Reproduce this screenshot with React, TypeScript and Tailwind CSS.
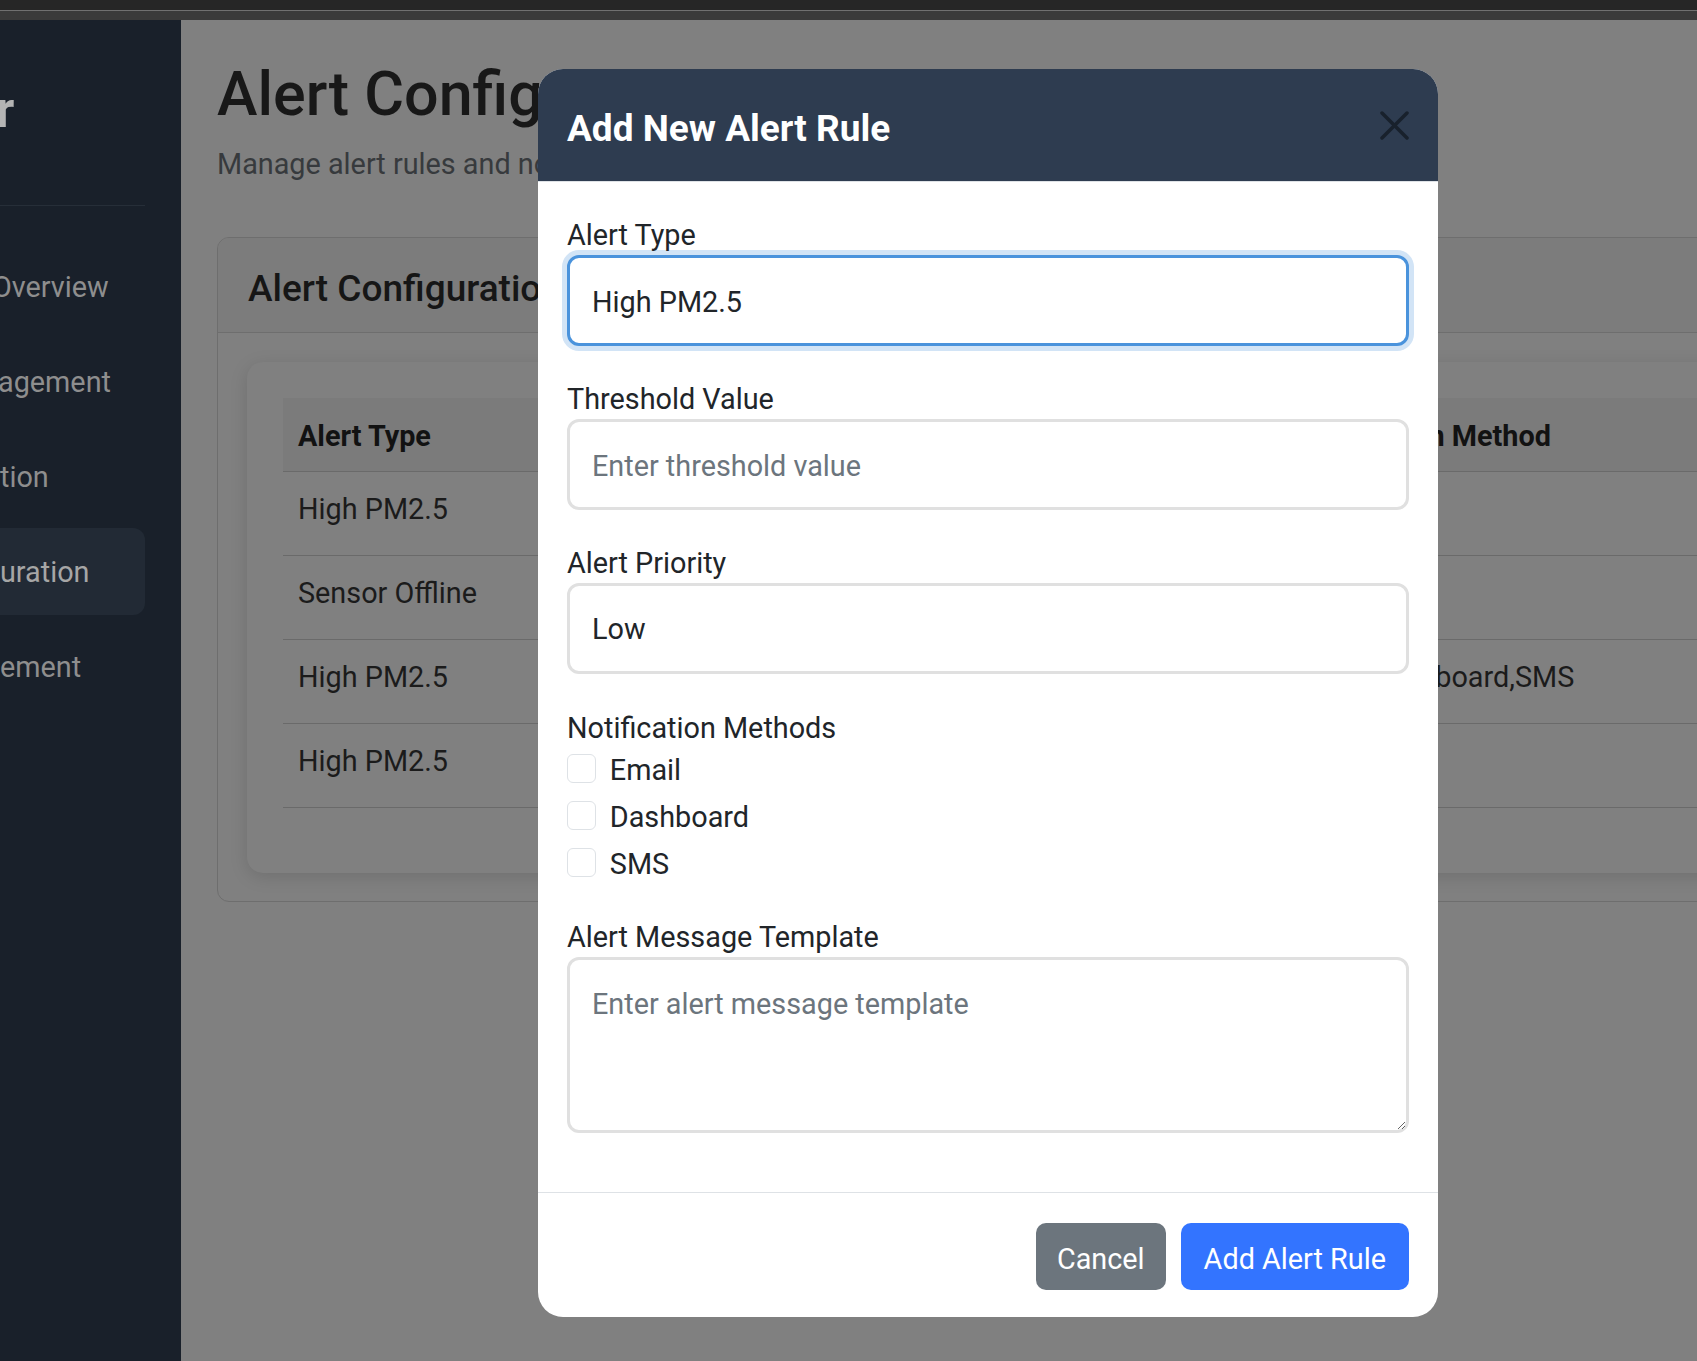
import React from "react";

const navItems = [
  { label: "Overview", shift: "-ml-[8px]", active: false },
  { label: "agement", shift: "-ml-[2px]", active: false },
  { label: "tion", shift: "ml-0", active: false },
  { label: "uration", shift: "ml-0", active: true },
  { label: "ement", shift: "ml-0", active: false },
];

const rules = [
  { type: "High PM2.5", threshold: "35", priority: "High", method: "Email" },
  { type: "Sensor Offline", threshold: "30", priority: "Medium", method: "Email" },
  { type: "High PM2.5", threshold: "50", priority: "High", method: "Email,Dashboard,SMS" },
  { type: "High PM2.5", threshold: "40", priority: "Low", method: "SMS" },
];

const Sidebar = () => (
  <aside className="w-[181px] shrink-0 overflow-hidden bg-[#19202a] pr-[36px]">
    <div className="-ml-[4px] mt-[60px] h-[60px] text-[50px] font-bold leading-[60px] text-[#b4b4b4]">
      r
    </div>
    <div className="mt-[65px] h-px bg-[#262e38]" />
    <nav className="mt-[37px] flex flex-col gap-[8px]">
      {navItems.map((item) => (
        <div
          key={item.label}
          className={`flex h-[87px] items-center overflow-hidden rounded-r-[12px] ${
            item.active ? "bg-[#222a35] text-[#a6a6a6]" : "text-[#8e8e8e]"
          }`}
        >
          <span className={`${item.shift} whitespace-nowrap pt-[2px] text-[28.8px] leading-[43px]`}>
            {item.label}
          </span>
        </div>
      ))}
    </nav>
  </aside>
);

const RulesTable = () => (
  <div className="mb-[29px]">
    <div className="grid h-[74px] grid-cols-[320px_330px_345px_440px_200px] border-b border-[#6a6a6a] bg-[#7b7b7b]">
      {["Alert Type", "Threshold", "Priority", "Notification Method", "Actions"].map((h) => (
        <div
          key={h}
          className="whitespace-nowrap px-[15px] pt-[17px] text-[28.8px] font-bold leading-[43px] text-[#121212]"
        >
          {h}
        </div>
      ))}
    </div>
    {rules.map((r, i) => (
      <div
        key={i}
        className="grid h-[84px] grid-cols-[320px_330px_345px_440px_200px] border-b border-[#6a6a6a]"
      >
        {[r.type, r.threshold, r.priority, r.method, ""].map((c, j) => (
          <div
            key={j}
            className="whitespace-nowrap px-[15px] pt-[16px] text-[28.8px] leading-[43px] text-[#1b1b1b]"
          >
            {c}
          </div>
        ))}
      </div>
    ))}
  </div>
);

const Field = ({ label, children }: { label: string; children: React.ReactNode }) => (
  <div className="mb-[30px]">
    <label className="block pt-[3px] text-[28.8px] leading-[40px] text-[#212529]">{label}</label>
    {children}
  </div>
);

const inputBase =
  "block h-[91px] w-full rounded-[12px] bg-white px-[22px] pt-[2px] text-[28.8px] leading-[43px] text-[#212529] outline-none placeholder:text-[#6c757d]";

const AlertModal = () => (
  <div className="absolute left-[538px] top-[69px] w-[900px] overflow-hidden rounded-[25px] bg-white">
    <div className="flex h-[113px] items-center justify-between border-b border-[#dee2e6] bg-[#2e3c50] px-[29px]">
      <h5 className="pt-[6px] text-[37px] font-bold leading-[43px] text-white">Add New Alert Rule</h5>
      <button type="button" className="flex h-[29px] w-[29px] items-center justify-center">
        <svg width="29" height="29" viewBox="0 0 29 29" fill="none">
          <path
            d="M2 2L27 27M27 2L2 27"
            stroke="#18212c"
            strokeWidth="3.5"
            strokeLinecap="round"
          />
        </svg>
      </button>
    </div>

    <div className="px-[29px] pb-[29px] pt-[30px]">
      <Field label="Alert Type">
        <input
          readOnly
          value="High PM2.5"
          className={`${inputBase} border-[3px] border-[#4a93dc] ring-[5px] ring-[#d2e4f6]`}
        />
      </Field>
      <Field label="Threshold Value">
        <input
          placeholder="Enter threshold value"
          className={`${inputBase} border-[3px] border-[#e0e0e0]`}
        />
      </Field>
      <Field label="Alert Priority">
        <select
          defaultValue="Low"
          className={`${inputBase} appearance-none border-[3px] border-[#e0e0e0]`}
        >
          <option>Low</option>
          <option>Medium</option>
          <option>High</option>
        </select>
      </Field>
      <div className="mb-[30px]">
        <div className="pt-[5px] text-[28.8px] leading-[38px] text-[#212529]">Notification Methods</div>
        <div className="flex flex-col gap-[4px]">
          {["Email", "Dashboard", "SMS"].map((m) => (
            <label key={m} className="flex h-[43px] items-center gap-[14px]">
              <input
                type="checkbox"
                className="h-[28.8px] w-[28.8px] appearance-none rounded-[6px] border border-[#dee2e6] bg-white"
              />
              <span className="pt-[4px] text-[28.8px] leading-[39px] text-[#212529]">{m}</span>
            </label>
          ))}
        </div>
      </div>
      <Field label="Alert Message Template">
        <textarea
          placeholder="Enter alert message template"
          className="block h-[176px] w-full resize-y rounded-[12px] border-[3px] border-[#e0e0e0] bg-white px-[22px] pb-[19px] pt-[23px] text-[28.8px] leading-[43px] text-[#212529] outline-none placeholder:text-[#6c757d]"
        />
      </Field>
    </div>

    <div className="flex justify-end gap-[15px] border-t border-[#dee2e6] px-[29px] pb-[27px] pt-[30px]">
      <button
        type="button"
        className="h-[67px] rounded-[10px] bg-[#6c757d] px-[21px] pt-[6px] text-[28.8px] leading-[43px] text-white"
      >
        Cancel
      </button>
      <button
        type="button"
        className="h-[67px] rounded-[10px] bg-[#3374ff] px-[23px] pt-[6px] text-[28.8px] leading-[43px] text-white"
      >
        Add Alert Rule
      </button>
    </div>
  </div>
);

export default function App() {
  return (
    <div className="relative h-[1361px] w-full overflow-hidden bg-[#808080] font-[Roboto,sans-serif]">
      <div className="h-[10px] bg-[#262626]" />
      <div className="h-px bg-[#707070]" />
      <div className="h-[9px] bg-[#3a3a3a]" />
      <div className="flex h-[1341px]">
        <Sidebar />
        <main className="min-w-0 flex-1 overflow-hidden pl-[36px] pt-[39px]">
          <h1 className="whitespace-nowrap text-[61px] font-medium leading-[71px] text-[#181818]">
            Alert Configuration
          </h1>
          <p className="mt-[11px] whitespace-nowrap pt-[2px] text-[28.8px] leading-[43px] text-[#373a3d]">
            Manage alert rules and notification settings
          </p>
          <section className="mt-[51px] w-[1800px] rounded-[12px] border border-[#6e6e6e]">
            <div className="h-[95px] rounded-t-[11px] border-b border-[#6e6e6e] bg-[#7c7c7c] px-[30px] pt-[29px]">
              <h5 className="text-[37px] font-medium leading-[43px] text-[#161616]">
                Alert Configuration
              </h5>
            </div>
            <div className="px-[29px] pb-[28px] pt-[29px]">
              <div className="rounded-[16px] bg-[#808080] px-[36px] pb-[36px] pt-[36px] shadow-[0_4px_18px_rgba(0,0,0,0.13)]">
                <RulesTable />
              </div>
            </div>
          </section>
        </main>
      </div>
      <AlertModal />
    </div>
  );
}
